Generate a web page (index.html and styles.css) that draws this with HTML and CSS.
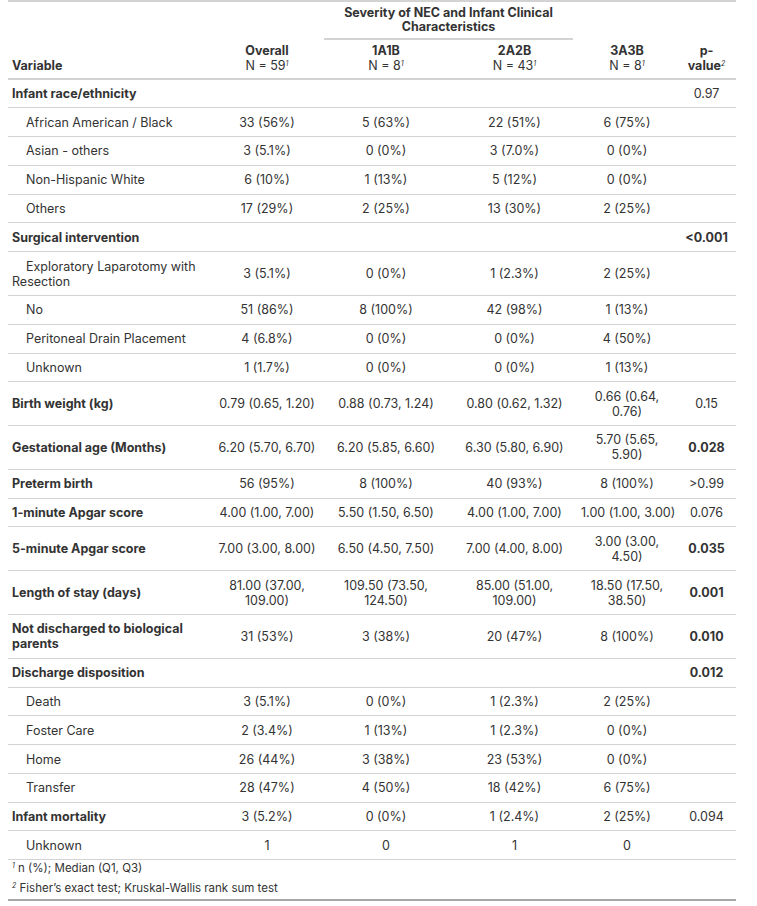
FILE: index.html
```html
<!DOCTYPE html>
<html>
<head>
<meta charset="utf-8">
<link rel="stylesheet" href="styles.css">
</head>
<body>
<table class="gt">
  <colgroup>
    <col class="c-var"><col class="c-all"><col class="c-1"><col class="c-2"><col class="c-3"><col class="c-p">
  </colgroup>
  <thead>
    <tr>
      <th class="lab lab-left" rowspan="2">Variable</th>
      <th class="lab" rowspan="2">Overall<br><span class="n">N = 59<span class="fm">1</span></span></th>
      <th class="spanner" colspan="2"><div class="spanner-in">Severity of NEC and Infant Clinical Characteristics</div></th>
      <th class="lab" rowspan="2">3A3B<br><span class="n">N = 8<span class="fm">1</span></span></th>
      <th class="lab" rowspan="2">p-<br>value<span class="fm">2</span></th>
    </tr>
    <tr>
      <th class="lab">1A1B<br><span class="n">N = 8<span class="fm">1</span></span></th>
      <th class="lab">2A2B<br><span class="n">N = 43<span class="fm">1</span></span></th>
    </tr>
  </thead>
  <tbody>
    <tr><td class="stub b">Infant race/ethnicity</td><td></td><td></td><td></td><td></td><td>0.97</td></tr>
    <tr><td class="stub ind">African American / Black</td><td>33 (56%)</td><td>5 (63%)</td><td>22 (51%)</td><td>6 (75%)</td><td></td></tr>
    <tr><td class="stub ind">Asian - others</td><td>3 (5.1%)</td><td>0 (0%)</td><td>3 (7.0%)</td><td>0 (0%)</td><td></td></tr>
    <tr><td class="stub ind">Non-Hispanic White</td><td>6 (10%)</td><td>1 (13%)</td><td>5 (12%)</td><td>0 (0%)</td><td></td></tr>
    <tr><td class="stub ind">Others</td><td>17 (29%)</td><td>2 (25%)</td><td>13 (30%)</td><td>2 (25%)</td><td></td></tr>
    <tr><td class="stub b">Surgical intervention</td><td></td><td></td><td></td><td></td><td class="b">&lt;0.001</td></tr>
    <tr><td class="stub ind">Exploratory Laparotomy with<br>Resection</td><td>3 (5.1%)</td><td>0 (0%)</td><td>1 (2.3%)</td><td>2 (25%)</td><td></td></tr>
    <tr><td class="stub ind">No</td><td>51 (86%)</td><td>8 (100%)</td><td>42 (98%)</td><td>1 (13%)</td><td></td></tr>
    <tr><td class="stub ind">Peritoneal Drain Placement</td><td>4 (6.8%)</td><td>0 (0%)</td><td>0 (0%)</td><td>4 (50%)</td><td></td></tr>
    <tr><td class="stub ind">Unknown</td><td>1 (1.7%)</td><td>0 (0%)</td><td>0 (0%)</td><td>1 (13%)</td><td></td></tr>
    <tr><td class="stub b">Birth weight (kg)</td><td>0.79 (0.65, 1.20)</td><td>0.88 (0.73, 1.24)</td><td>0.80 (0.62, 1.32)</td><td>0.66 (0.64,<br>0.76)</td><td>0.15</td></tr>
    <tr><td class="stub b">Gestational age (Months)</td><td>6.20 (5.70, 6.70)</td><td>6.20 (5.85, 6.60)</td><td>6.30 (5.80, 6.90)</td><td>5.70 (5.65,<br>5.90)</td><td class="b">0.028</td></tr>
    <tr><td class="stub b">Preterm birth</td><td>56 (95%)</td><td>8 (100%)</td><td>40 (93%)</td><td>8 (100%)</td><td>&gt;0.99</td></tr>
    <tr><td class="stub b">1-minute Apgar score</td><td>4.00 (1.00, 7.00)</td><td>5.50 (1.50, 6.50)</td><td>4.00 (1.00, 7.00)</td><td>1.00 (1.00, 3.00)</td><td>0.076</td></tr>
    <tr><td class="stub b">5-minute Apgar score</td><td>7.00 (3.00, 8.00)</td><td>6.50 (4.50, 7.50)</td><td>7.00 (4.00, 8.00)</td><td>3.00 (3.00,<br>4.50)</td><td class="b">0.035</td></tr>
    <tr><td class="stub b">Length of stay (days)</td><td>81.00 (37.00,<br>109.00)</td><td>109.50 (73.50,<br>124.50)</td><td>85.00 (51.00,<br>109.00)</td><td>18.50 (17.50,<br>38.50)</td><td class="b">0.001</td></tr>
    <tr><td class="stub b">Not discharged to biological<br>parents</td><td>31 (53%)</td><td>3 (38%)</td><td>20 (47%)</td><td>8 (100%)</td><td class="b">0.010</td></tr>
    <tr><td class="stub b">Discharge disposition</td><td></td><td></td><td></td><td></td><td class="b">0.012</td></tr>
    <tr><td class="stub ind">Death</td><td>3 (5.1%)</td><td>0 (0%)</td><td>1 (2.3%)</td><td>2 (25%)</td><td></td></tr>
    <tr><td class="stub ind">Foster Care</td><td>2 (3.4%)</td><td>1 (13%)</td><td>1 (2.3%)</td><td>0 (0%)</td><td></td></tr>
    <tr><td class="stub ind">Home</td><td>26 (44%)</td><td>3 (38%)</td><td>23 (53%)</td><td>0 (0%)</td><td></td></tr>
    <tr><td class="stub ind">Transfer</td><td>28 (47%)</td><td>4 (50%)</td><td>18 (42%)</td><td>6 (75%)</td><td></td></tr>
    <tr><td class="stub b">Infant mortality</td><td>3 (5.2%)</td><td>0 (0%)</td><td>1 (2.4%)</td><td>2 (25%)</td><td>0.094</td></tr>
    <tr><td class="stub ind">Unknown</td><td>1</td><td>0</td><td>1</td><td>0</td><td></td></tr>
  </tbody>
  <tfoot>
    <tr><td class="fn fn-first" colspan="6"><span class="fm fm-fn">1</span> n (%); Median (Q1, Q3)</td></tr>
    <tr><td class="fn fn-last" colspan="6"><span class="fm fm-fn">2</span> Fisher’s exact test; Kruskal-Wallis rank sum test</td></tr>
  </tfoot>
</table>
</body>
</html>
```

FILE: styles.css
```css
html, body {
  margin: 0;
  padding: 0;
  background: #ffffff;
}

.gt {
  margin-left: 8px;
  width: 728px;
  table-layout: fixed;
  border-collapse: collapse;
  font-family: Inter, "Noto Sans", "Liberation Sans", sans-serif;
  font-size: 12.5px;
  line-height: 15px;
  color: #333333;
  border-top: 2px solid #D3D3D3;
  border-bottom: 2px solid #A8A8A8;
}

.c-var { width: 206px; }
.c-all { width: 106px; }
.c-1 { width: 132px; }
.c-2 { width: 125px; }
.c-3 { width: 100px; }
.c-p { width: 59px; }

th {
  font-weight: 700;
  padding: 0;
  line-height: 14px;
}

.lab {
  vertical-align: bottom;
  text-align: center;
  line-height: 15px;
  padding: 3px 4px 4.5px 4px;
  border-bottom: 2px solid #D3D3D3;
}

.lab-left {
  text-align: left;
  padding-left: 4px;
}

.n {
  font-weight: 400;
}

.spanner {
  padding: 4px 4px 0 4px;
  vertical-align: bottom;
  text-align: center;
}

.spanner-in {
  padding-bottom: 4px;
  border-bottom: 2px solid #D3D3D3;
}

td {
  padding: 6.4px 4px;
  text-align: center;
  vertical-align: middle;
  white-space: nowrap;
  border-bottom: 1px solid #D3D3D3;
}

td.stub {
  text-align: left;
}

td.ind {
  text-indent: 14px;
}

.b {
  font-weight: 700;
}

.fm {
  font-size: 7px;
  font-style: italic;
  font-weight: 400;
  line-height: 0;
  vertical-align: 0.6em;
}

.fn {
  text-align: left;
  font-size: 11.5px;
  line-height: 15px;
  border-bottom: none;
  padding: 2.5px 4px;
}

.fn-first {
  padding-top: 1px;
}

.fn-last {
  padding-bottom: 3px;
}
```
